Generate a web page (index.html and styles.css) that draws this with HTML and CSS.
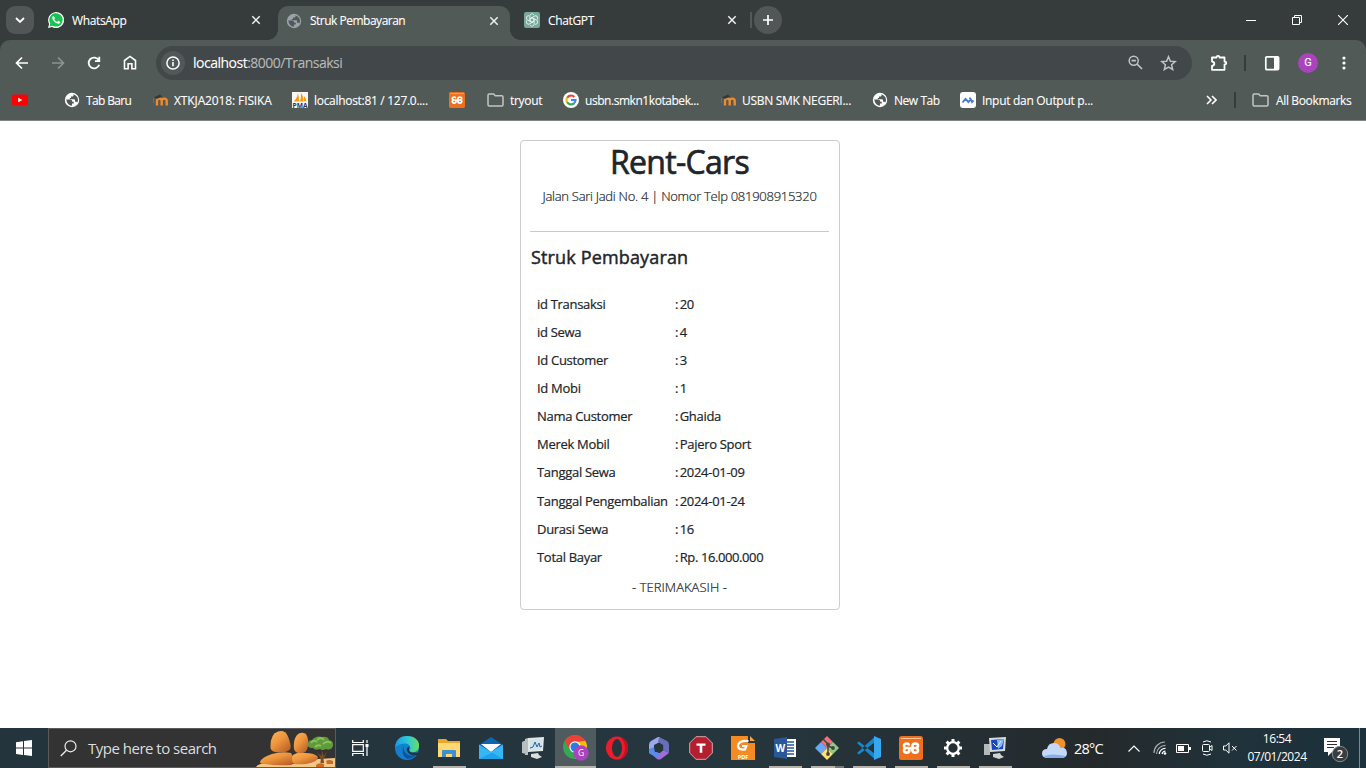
FILE: index.html
```html
<!DOCTYPE html>
<html lang="id">
<head>
<meta charset="utf-8">
<title>Struk Pembayaran</title>
<link rel="stylesheet" href="styles.css">
</head>
<body>
<svg class="defs" width="0" height="0">
  <defs>
    <symbol id="globe" viewBox="0 0 16 16"><circle cx="8" cy="8" r="7.200" fill="currentColor"/><path d="M2.300 7.600h3.500q2.500 0 2.500 2.200h1.500v1.700H8v2.300Q3 13.500 2.300 7.600zM9.500 2.200v1.200q0 1-1.200 1H7v1.500H5.800v1.400h4.400q.8 0 .8 1.300v1.200h1.300q.9 0 1.200.8Q15.500 4.500 9.500 2.200z" fill="var(--cut)"/></symbol>
    <symbol id="close" viewBox="0 0 10 10"><path d="M1.300 1.300l7.400 7.400M8.700 1.300L1.300 8.700" stroke="#eef1f0" stroke-width="1.500"/></symbol>
    <symbol id="moodle" viewBox="0 0 16 16"><path d="M5 13.500V9c0-3.200 4.700-3.200 4.700 0v4.500M9.700 9c0-3.200 5-3.200 5 0v4.500" fill="none" stroke="#ef8b2c" stroke-width="2.400"/><path d="M1.500 5.500L8 2.500l2 2-4.500 2.200z" fill="#353838"/><path d="M1.500 5.500v5.500" stroke="#6d6c66"/></symbol>
    <symbol id="folder" viewBox="0 0 17 14"><path d="M1 2.200V11.800q0 1.200 1.200 1.200H14.800q1.200 0 1.200-1.200V4q0-1.200-1.200-1.200H8.300L6.600 1H2.200Q1 1 1 2.200z" fill="none" stroke="#c2c5c3" stroke-width="1.500"/></symbol>
    <symbol id="xampp" viewBox="0 0 24 24"><rect width="24" height="24" rx="2.500" fill="#ee6f1c"/><path d="M2 2.500h20" stroke="#ffc59d"/><path d="M9.800 9.500Q9.800 7.500 7.800 7.500 5 7.500 5 9.800T7.800 12h8.400q2.800 0 2.800-2.200T16.200 7.500q-2.800 0-2.800 2.500v4q0 2.600 2.800 2.600 2.800 0 2.800-2.300T16.200 12M7.800 12Q5 12 5 14.300t2.800 2.300q2.600 0 2.600-2.400V12" fill="none" stroke="#fff" stroke-width="2.600"/></symbol>
  </defs>
</svg>

<header class="browser">
  <div class="tabs">
    <div class="tab-menu"><svg width="10" height="6" viewBox="0 0 10 6"><path d="M1 1l4 4 4-4" fill="none" stroke="#fff" stroke-width="1.800"/></svg></div>
    <div class="tab tab-first">
      <svg width="16" height="16" viewBox="0 0 16 16"><path d="M0 16l1.100-4.100A8 8 0 1 1 4.100 15z" fill="#fff"/><path d="M1.500 14.500l.8-3A6.700 6.700 0 1 1 4.600 13.700z" fill="#17c351"/><path d="M5.700 3.900c-1.700.3-1.900 2.200-.8 3.900 1.200 2 3.300 3.800 5.400 4 1.300 0 2.100-1 1.900-2l-2-1-1 1.200C7.700 9.400 6.700 8.300 6.200 7.200L7 6.200z" fill="#fff"/></svg>
      <span class="tab-title">WhatsApp</span><svg class="x" width="10" height="10"><use href="#close"/></svg>
    </div>
    <div class="tab tab-active">
      <svg class="globe-grey" width="16" height="16"><use href="#globe"/></svg>
      <span class="tab-title title-active">Struk Pembayaran</span><svg class="x" width="10" height="10"><use href="#close"/></svg>
    </div>
    <div class="tab tab-last">
      <svg width="16" height="16" viewBox="0 0 16 16"><rect width="16" height="16" rx="2" fill="#76a99a"/><g fill="none" stroke="#e9f3ef" stroke-width=".9"><path id="petal" d="M8 5.700L5.900 6.900V3.900c0-2.400 3.500-2.800 4.200-.7M8 5.700l2.100 1.200"/><use href="#petal" transform="rotate(60 8 8)"/><use href="#petal" transform="rotate(120 8 8)"/><use href="#petal" transform="rotate(180 8 8)"/><use href="#petal" transform="rotate(240 8 8)"/><use href="#petal" transform="rotate(300 8 8)"/></g></svg>
      <span class="tab-title">ChatGPT</span><svg class="x" width="10" height="10"><use href="#close"/></svg>
    </div>
    <div class="tab-sep"></div>
    <div class="new-tab"><svg width="12" height="12" viewBox="0 0 12 12"><path d="M6 1v10M1 6h10" stroke="#fff" stroke-width="1.700"/></svg></div>
    <div class="window-controls">
      <svg width="10" height="10" viewBox="0 0 10 10"><path d="M0 5.500h10" stroke="#fff"/></svg>
      <svg width="10" height="10" viewBox="0 0 10 10"><path d="M.5 2.500h7v7h-7zM2.500 2.500v-2h7v7h-2" fill="none" stroke="#fff"/></svg>
      <svg width="10" height="10" viewBox="0 0 10 10"><path d="M0 0l10 10M10 0L0 10" stroke="#fff" stroke-width="1.100"/></svg>
    </div>
  </div>

  <div class="toolbar">
    <div class="nav">
      <svg width="14" height="14" viewBox="0 0 14 14"><path d="M13 7H2M7 1.500L1.500 7 7 12.500" fill="none" stroke="#fff" stroke-width="1.700"/></svg>
      <svg width="14" height="14" viewBox="0 0 14 14"><path d="M1 7h11M7 1.500L12.500 7 7 12.500" fill="none" stroke="#8d9391" stroke-width="1.700"/></svg>
      <svg width="14" height="14" viewBox="0 0 14 14"><path d="M11.800 4.300A5.400 5.400 0 1 0 12.200 8.700M12.300.8v4.400H8" fill="none" stroke="#fff" stroke-width="1.800"/></svg>
      <svg width="14" height="15" viewBox="0 0 14 15"><path d="M1.500 5.500v8.300h3.600V8.700h3.800v5.100h3.600V5.500L7 1.400z" fill="none" stroke="#fff" stroke-width="1.600"/></svg>
    </div>
    <div class="omnibox">
      <div class="info"><svg width="14" height="14" viewBox="0 0 14 14"><circle cx="7" cy="7" r="6.100" fill="none" stroke="#fff" stroke-width="1.500"/><path d="M7 6v4.300M7 3.500v1.500" stroke="#fff" stroke-width="1.600"/></svg></div>
      <div class="url"><span class="host">localhost</span>:8000/Transaksi</div>
      <svg width="15" height="15" viewBox="0 0 15 15"><circle cx="5.700" cy="5.700" r="4.500" fill="none" stroke="#c1c4c4" stroke-width="1.500"/><path d="M3.500 5.700h4.400M9 9l5 5" stroke="#c1c4c4" stroke-width="1.700"/></svg>
      <svg width="17" height="16" viewBox="0 0 17 16"><path d="M8.500 1.700l1.900 4.500 4.900.4-3.700 3.200 1.100 4.700-4.200-2.500-4.200 2.500 1.100-4.700L1.700 6.600l4.900-.4z" fill="none" stroke="#c1c4c4" stroke-width="1.500"/></svg>
    </div>
    <div class="actions">
      <svg width="18" height="18" viewBox="0 0 18 18"><path d="M2 3.500H6.500Q6.500 1.800 8 1.800T9.500 3.500H14.500V7.500Q16.300 7.700 16.300 9T14.500 10.500V15.800H2V11.800Q4.300 11.500 4.300 9.700T2 7.500z" fill="none" stroke="#fff" stroke-width="1.800" stroke-linejoin="round"/></svg>
      <i class="vline"></i>
      <svg width="16" height="16" viewBox="0 0 16 16"><rect x="1.800" y="1.800" width="12.800" height="12.800" rx="1" fill="none" stroke="#fff" stroke-width="1.700"/><path d="M10 1h4v14h-4z" fill="#fff"/></svg>
      <b class="avatar">G</b>
      <svg width="4" height="14" viewBox="0 0 4 14"><g fill="#fff"><circle cx="2" cy="2" r="1.600"/><circle cx="2" cy="7" r="1.600"/><circle cx="2" cy="12" r="1.600"/></g></svg>
    </div>
  </div>

  <nav class="bookmarks">
    <a><svg width="16" height="16" viewBox="0 0 16 16"><rect y="2.500" width="16" height="11" rx="2" fill="#f00"/><path d="M6.200 5.800v4.400L10.400 8z" fill="#fff"/></svg></a>
    <a class="tight"><svg class="globe" width="16" height="16"><use href="#globe"/></svg><span>Tab Baru</span></a>
    <a class="loose"><svg width="16" height="16"><use href="#moodle"/></svg><span>XTKJA2018: FISIKA</span></a>
    <a><svg width="16" height="16" viewBox="0 0 16 16"><path d="M0 0h16v16H0z" fill="#f8f7f2"/><path d="M1.500 9.500Q5 7 6 1l1.500 8.500zM8 9.500Q9.500 5 8.800 1q3 3 2.500 8.500zM12 9V4q2 2 2.500 5.500z" fill="#f49a16"/><text x=".5" y="15.500" font-size="6.500" font-weight="700" textLength="15" lengthAdjust="spacingAndGlyphs" letter-spacing="0" fill="#30305f">PMA</text></svg><span>localhost:81 / 127.0....</span></a>
    <a><svg width="16" height="16"><use href="#xampp"/></svg></a>
    <a><svg width="17" height="14"><use href="#folder"/></svg><span>tryout</span></a>
    <a class="snug"><svg width="16" height="16" viewBox="0 0 16 16"><circle cx="8" cy="8" r="8" fill="#fff"/><g fill="none" stroke-width="2.200"><path d="M4.200 5.700A4.500 4.500 0 0 1 11.300 4.900" stroke="#ea4335"/><path d="M4.200 5.600a4.500 4.500 0 0 0 0 4.800" stroke="#fbbc05"/><path d="M4.200 10.300a4.500 4.500 0 0 0 6.800 1.100" stroke="#34a853"/><path d="M8 8h4.500a4.500 4.500 0 0 1-1.600 3.500" stroke="#4285f4"/></g></svg><span>usbn.smkn1kotabek...</span></a>
    <a><svg width="16" height="16"><use href="#moodle"/></svg><span>USBN SMK NEGERI...</span></a>
    <a class="snug"><svg class="globe" width="16" height="16"><use href="#globe"/></svg><span>New Tab</span></a>
    <a><svg width="16" height="16" viewBox="0 0 16 16"><rect width="16" height="16" rx="3" fill="#fff"/><path d="M2.500 10.500l3-3.500 3 3 2.500-3M10.500 6.500L12 10l1.500-1.500M10 7V5.500" fill="none" stroke="#4b7bd0" stroke-width="1.900"/></svg><span>Input dan Output p...</span></a>
    <a><svg width="11" height="10" viewBox="0 0 11 10"><path d="M1 1l4 4-4 4M6 1l4 4-4 4" fill="none" stroke="#fff" stroke-width="1.600"/></svg></a>
    <i class="vline"></i>
    <a class="all"><svg width="17" height="14"><use href="#folder"/></svg><span>All Bookmarks</span></a>
  </nav>
</header>

<main class="page">
  <section class="receipt">
    <h2>Rent-Cars</h2>
    <p class="address">Jalan Sari Jadi No. 4 | Nomor Telp 081908915320</p>
    <hr>
    <h5>Struk Pembayaran</h5>
    <table>
      <tr><td>id Transaksi</td><td><i>:</i>20</td></tr>
      <tr><td>id Sewa</td><td><i>:</i>4</td></tr>
      <tr><td>Id Customer</td><td><i>:</i>3</td></tr>
      <tr><td>Id Mobi</td><td><i>:</i>1</td></tr>
      <tr><td>Nama Customer</td><td><i>:</i>Ghaida</td></tr>
      <tr><td>Merek Mobil</td><td><i>:</i>Pajero Sport</td></tr>
      <tr><td>Tanggal Sewa</td><td><i>:</i>2024-01-09</td></tr>
      <tr><td>Tanggal Pengembalian</td><td><i>:</i>2024-01-24</td></tr>
      <tr><td>Durasi Sewa</td><td><i>:</i>16</td></tr>
      <tr><td>Total Bayar</td><td class="total"><i>:</i>Rp. 16.000.000</td></tr>
    </table>
    <p class="thanks">- TERIMAKASIH -</p>
  </section>
</main>

<footer class="taskbar">
  <div class="start"><svg width="16" height="16" viewBox="0 0 16 16"><path d="M0 2.200l7-1v6.400H0zM8 1l8-1v7.600H8zM0 8.500h7v6.400l-7-1zM8 8.500h8V16l-8-1z" fill="#fff"/></svg></div>
  <div class="search">
    <svg width="17" height="17" viewBox="0 0 17 17"><circle cx="10.500" cy="6.300" r="5.500" fill="none" stroke="#eee" stroke-width="1.200"/><path d="M6.500 10.300L.8 16" stroke="#eee" stroke-width="1.300"/></svg>
    <span>Type here to search</span>
    <svg class="scene" width="80" height="37" viewBox="0 0 80 37">
      <defs><linearGradient id="rock" x2=".8" y2="1"><stop stop-color="#ffb55c"/><stop offset=".5" stop-color="#ed943c"/><stop offset="1" stop-color="#b9602a"/></linearGradient></defs>
      <path d="M1 37Q3 33 15 33l30 1 18-5 17-1v9z" fill="#f3c789"/>
      <path d="M5 32q2-5 12-8 10-3 19-1 4 5 1 12-15 1-27-1-5 0-5-2z" fill="url(#rock)"/>
      <path d="M15.500 18Q15 4 23 1.500q7-2 10 5 4 10 2 13-3 3-9 3-10 0-10.500-4.500z" fill="url(#rock)"/>
      <path d="M38 25q4-3 12-2 10 0 13 4 0 5-12 7-12 1-13-1-2-5 0-8z" fill="url(#rock)"/>
      <path d="M39 19q-1-9 3-14 4-4 9-1 3 5 2 12-1 6-5 7-8 1-9-4z" fill="url(#rock)"/>
      <path d="M61 35q3-3 8-1v3h-8zM71 31q3-2 7 0v3h-6z" fill="#c96b29"/>
      <path d="M65.500 33q1.500-5-4-11l5 4 .5-6 1.500 6 4-5-4 8 .5 4z" fill="#7c4a25"/>
      <path d="M53 16q-1-6 4-6 4-5 10-3 6-1 7 3 5 1 4 6-2 5-7 3-4 2-6 0-5 2-7-1-4 0-5-2z" fill="#5f9a3c"/>
      <path d="M56 13q3-4 6-1M62 10q4-4 7 0M68 14q4-4 8-1M60 17q3-3 6-1" fill="none" stroke="#8cc257" stroke-width="1.800"/>
    </svg>
  </div>
  <div class="task-view"><svg width="17" height="16" viewBox="0 0 17 16"><path d="M.7 4.700h10.600v6.600H.7zM.7 0v2.500h10.600V0M.7 16v-2.500h10.600V16M15 0v3M15 7v9" fill="none" stroke="#fff" stroke-width="1.200"/><path d="M13.500 4h3v3h-3z" fill="#fff"/></svg></div>

  <div class="apps">
    <div><svg width="24" height="24" viewBox="0 0 24 24"><defs><linearGradient id="edge" x2="1"><stop stop-color="#169bea"/><stop offset=".55" stop-color="#30cbd2"/><stop offset="1" stop-color="#6bdb5e"/></linearGradient></defs><circle cx="12" cy="12" r="12" fill="#137fce"/><path d="M0 11C1 3 6 0 12 0c8 0 13 5 12 11-.8 4.500-5 6-8 5-2-.6-2-1.500-1-2.500C17 9 10 4 0 11z" fill="url(#edge)"/><path d="M9 10q-4 8 2.500 12.500Q16 24 22 18q-5 3-9.500.500T9 10z" fill="#0c55a5"/><path d="M14.500 10.500q-2 6 4 6h6v1.500q-5 2.500-9 .5-4.500-2.500-3.500-6.500z" fill="#24363d"/></svg></div>
    <div class="open"><svg width="22" height="19" viewBox="0 0 22 19"><path d="M0 0h8l2 2h12v16H0z" fill="#e9a82b"/><path d="M0 4h22v14H0z" fill="#ffda72"/><path d="M4 18v-6q0-1 1-1h12q1 0 1 1v6h-4v-3H8v3z" fill="#3e91d1"/></svg></div>
    <div><svg width="24" height="22" viewBox="0 0 24 22"><path d="M0 8L12 0l12 8v14H0z" fill="#0e65b2"/><path d="M2 7h20L12 15z" fill="#fff"/><path d="M0 7.500l12 7.500 12-7.500V22H0z" fill="#38b6f3"/><path d="M0 22l13-6.500L24 22z" fill="#1fa2ec"/></svg></div>
    <div><svg width="24" height="22" viewBox="0 0 24 22"><path d="M1 5l4-2v14l-4-1zM4 2l3-1v17H4z" fill="#b9bebe"/><path d="M7 1l16-1-1 14-15 1z" fill="#e2e6e4"/><path d="M9 3l12-1-1 10-11 1z" fill="#cfe3ea"/><path d="M9 11l3-1 2-5 2 5 2-4 1 4 2-1" fill="none" stroke="#2865a7"/><path d="M10 17l7-1 1 2 3 2-5 2-6-2z" fill="#dcdedc"/></svg></div>
    <div class="open current"><svg width="26" height="26" viewBox="0 0 26 26"><circle cx="12" cy="12" r="12" fill="#34a853"/><path d="M1.600 6A12 12 0 0 1 22.400 6L12 7.500 7 15z" fill="#ea4335"/><path d="M22.400 6A12 12 0 0 1 12 24l5-9-5-8z" fill="#fbbc04"/><circle cx="12" cy="12" r="5.700" fill="#fff"/><circle cx="12" cy="12" r="4.500" fill="#287ce5"/><circle cx="18" cy="18" r="7.700" fill="#a944bd"/><text x="18" y="21" text-anchor="middle" font-size="8.500" fill="#fff">G</text></svg></div>
    <div><svg width="22" height="24" viewBox="0 0 22 24"><ellipse cx="11" cy="12" rx="11" ry="11.500" fill="#ed1c2e"/><path d="M14 1q8 2 8 11t-8 11q5-4 5-11T14 1z" fill="#bc1222"/><ellipse cx="11" cy="12" rx="5" ry="9" fill="#26363d"/></svg></div>
    <div><svg width="22" height="24" viewBox="0 0 22 24"><path d="M10 1L3 5Q1 6 1 9v8l6 3-1-3V9l6-3V1z" fill="#9ba8eb"/><path d="M11 1l8 4q2 1 2 4v8l-6-3V9l-5-3z" fill="#686fba"/><path d="M1 16l6 0 5 1 3-3 6 3-8 6q-2 1-4 0z" fill="#a36bdc"/><path d="M1 13v4l8 5 4-5-6-1-1-5z" fill="#588cec"/><path d="M11 6.800l4.200 2.500v5L11 17l-4.200-2.500v-5z" fill="#26363d"/></svg></div>
    <div><svg width="24" height="24" viewBox="0 0 24 24"><path d="M7 .7h10L23.300 7v10L17 23.300H7L.7 17V7z" fill="#b31f2e" stroke="#dba6a9"/><path d="M7.500 7.500h9v2.300h-3.200v7h-2.600v-7H7.500z" fill="#fff"/></svg></div>
    <div><svg width="24" height="24" viewBox="0 0 24 24"><path d="M0 0h17v7h7v17H0z" fill="#f58b22"/><path d="M19 0l5 5h-5z" fill="#f8a54c"/><path d="M17.500 5Q8 4 7 9.500q-.5 4.500 7 4L15.300 10H11" fill="none" stroke="#fff" stroke-width="2.200"/><text x="12" y="22.500" text-anchor="middle" font-size="5.500" font-weight="700" fill="#fff">PDF</text></svg></div>
    <div class="open"><svg width="22" height="22" viewBox="0 0 22 22"><path d="M11 2h11v18H11z" fill="#fff"/><path d="M13 5h7M13 8h7M13 11h7M13 14h7M13 17h7" stroke="#285797" stroke-width="1.300"/><path d="M0 2l13-2v22L0 20z" fill="#2b579a"/><text x="6.300" y="14.500" text-anchor="middle" font-size="10" font-weight="700" fill="#fff">W</text></svg></div>
    <div class="open multi"><svg width="24" height="24" viewBox="0 0 24 24"><path d="M12 0l6 6-6 6-6-6z" fill="#ef7377"/><path d="M6 6l6 6-6 6-6-6z" fill="#6aa8f7"/><path d="M18 6l6 6-6 6-6-6z" fill="#8fcd83"/><path d="M12 12l6 6-6 6-6-6z" fill="#ffe072"/><path d="M8 3l5 5v10M13 10l5 2" fill="none" stroke="#454640" stroke-width="1.500"/><g fill="#454640"><circle cx="13" cy="8.500" r="1.900"/><circle cx="13" cy="18" r="1.900"/><circle cx="18" cy="12" r="1.900"/></g></svg></div>
    <div class="open"><svg width="24" height="24" viewBox="0 0 24 24"><path d="M0 7l2-1.500L18 18v5.500zM0 17l2 1.500L18 6V.5z" fill="#1687ce"/><path d="M17 0l7 3v18l-7 3z" fill="#35a9ef"/></svg></div>
    <div class="open"><svg width="24" height="24"><use href="#xampp"/></svg></div>
    <div class="open"><svg width="20" height="20" viewBox="0 0 20 20"><circle cx="10" cy="10" r="5.800" fill="none" stroke="#fff" stroke-width="2.300"/><g stroke="#fff" stroke-width="3"><path d="M10 1v3M10 16v3M1 10h3M16 10h3M3.600 3.600l2.200 2.200M14.200 14.200l2.200 2.200M3.600 16.400l2.200-2.200M14.200 5.800l2.200-2.200"/></g></svg></div>
    <div class="open"><svg width="24" height="22" viewBox="0 0 24 22"><path d="M1 7h6v11H1z" fill="#b4babb"/><path d="M6 1l17-1-1 14-15 1z" fill="#d5dcdd"/><path d="M8 3l13-1-1 10-11 1z" fill="#1946bc"/><path d="M14 3l7-1-2 7-4 3z" fill="#88b5f4"/><path d="M10 6l4 4 4-6" stroke="#e5eeff" fill="none"/><path d="M10 17l7-1 1 2 3 2-5 2-6-2z" fill="#d1d3d1"/></svg></div>
  </div>

  <div class="weather"><svg width="25" height="20" viewBox="0 0 25 20"><circle cx="17.500" cy="6" r="6" fill="#ef922d"/><path d="M5 20q-5-.5-5-4.500Q0 11 5 11q1-6 7-6 5 0 6.500 5 6-1 6.500 5 0 4.500-5 5z" fill="#c4d9f7"/><path d="M2 18q7-3 22 0-2 2-5 2H5q-2 0-3-2z" fill="#87adeb"/></svg><span>28°C</span></div>
  <div class="tray">
    <svg width="12" height="7" viewBox="0 0 12 7"><path d="M.5 6.500L6 1l5.500 5.500" fill="none" stroke="#fff" stroke-width="1.200"/></svg>
    <svg width="14" height="14" viewBox="0 0 14 14"><g fill="none"><path d="M1 12A11 11 0 0 1 12 1M3.500 13A9 9 0 0 1 12.500 4.300" stroke="#a5adb0" stroke-width="1.200"/><path d="M6.300 13A6 6 0 0 1 12.500 7.300M9 13a4 4 0 0 1 3.500-3" stroke="#fff" stroke-width="1.200"/></g><circle cx="12" cy="12.500" r="1.300" fill="#fff"/></svg>
    <svg width="15" height="9" viewBox="0 0 15 9"><path d="M.5.500h12v8H.5z" fill="none" stroke="#fff"/><path d="M2 2h6v5H2zM13 3h2v3h-2z" fill="#fff"/></svg>
    <svg width="13" height="16" viewBox="0 0 13 16"><rect x="1.500" y="4.500" width="7" height="7" rx="1" fill="none" stroke="#fff"/><path d="M9 7l2-1.500v5L9 9M2 2q3.500-2.500 8 0M2 14q3.500 2.500 8 0" fill="none" stroke="#fff"/></svg>
    <svg width="15" height="12" viewBox="0 0 15 12"><path d="M.5 4h2.300L6 .8v10.400L2.800 8H.5zM9 4l4.500 4.500M13.500 4L9 8.500" fill="none" stroke="#fff"/></svg>
  </div>
  <div class="clock"><span>16:54</span><span>07/01/2024</span></div>
  <div class="notifications"><svg width="25" height="25" viewBox="0 0 25 25"><path d="M0 0h16v14H8l-4 4v-4H0z" fill="#fff"/><path d="M3 3.500h10M3 6.500h10M3 9.500h7" stroke="#22323a"/><circle cx="16" cy="16" r="7.700" fill="#393d40" stroke="#85898b"/><text x="16" y="20" text-anchor="middle" font-size="11" font-weight="600" fill="#fff">2</text></svg></div>
</footer>
</body>
</html>
```
FILE: styles.css
```css
* { box-sizing: border-box; }
body {
  margin: 0;
  height: 768px;
  display: flex;
  flex-direction: column;
  overflow: hidden;
  background: #fff;
  color: #212529;
  font-family: "Open Sans", "Noto Sans", sans-serif;
  font-size: 12px;
}
svg { display: block; flex: none; }
.defs { position: absolute; }
.browser { height: 121px; background: #363c3b; color: #fff; -webkit-text-stroke: .1px; }

.tabs { height: 40px; display: flex; align-items: center; padding-left: 6px; }
.tab-menu { width: 28px; height: 28px; border-radius: 9px; background: #505756; display: grid; place-items: center; }
.tab { width: 238px; display: flex; align-items: center; gap: 8px; padding: 0 17px 0 14px; height: 28px; }
.tab-first { width: 244px; }
.tab-last { padding-right: 11px; }
.tab .x { margin-left: auto; }
.tab-title { white-space: nowrap; letter-spacing: -.35px; }
.title-active { letter-spacing: -.5px; }
.tab-active { width: 232px; height: 34px; align-self: flex-end; background: #525a58; border-radius: 10px 10px 0 0; padding: 0 11px 5px 8px; position: relative; }
.tab-active::before, .tab-active::after { content: ""; position: absolute; bottom: 0; width: 10px; height: 10px; }
.tab-active::before { left: -10px; background: radial-gradient(circle at 0 0, transparent 9.500px, #525a58 10px); }
.tab-active::after { right: -10px; background: radial-gradient(circle at 100% 0, transparent 9.500px, #525a58 10px); }
.globe-grey { color: #9da1aa; --cut: #525a58; }
.globe { color: #fff; --cut: #525a58; }
.tab-sep { width: 2px; height: 16px; background: #535958; margin-left: 2px; }
.new-tab { width: 28px; height: 28px; margin-left: 2px; border-radius: 50%; background: #505756; display: grid; place-items: center; }
.window-controls { margin-left: auto; width: 138px; display: grid; grid-template-columns: repeat(3, 46px); justify-items: center; }

.toolbar { height: 45px; background: #525a58; border-radius: 10px 10px 0 0; display: flex; align-items: center; }
.nav { width: 156px; padding-left: 15px; display: flex; gap: 22px; align-items: center; }
.omnibox { width: 1036px; height: 34px; border-radius: 17px; background: #424749; display: flex; align-items: center; padding: 0 15px 0 5px; }
.info { width: 24px; height: 24px; border-radius: 50%; background: #525858; display: grid; place-items: center; }
.url { flex: 1; margin-left: 8px; font-size: 14px; letter-spacing: -.5px; color: #b6baba; }
.host { color: #fff; }
.omnibox > svg:last-child { margin-left: 17px; }
.actions { flex: 1; display: grid; grid-template-columns: 34px 19px 35px 44px 4px; align-items: center; padding-left: 18px; }
.actions svg:nth-of-type(2) { margin-left: 1px; }
.vline { width: 2px; height: 16px; background: #363c3b; }
.avatar { width: 20px; height: 20px; border-radius: 50%; background: #a944bd; font: 11px/20px Roboto, sans-serif; text-align: center; }

.bookmarks { height: 36px; background: #525a58; border-bottom: 1px solid #808684; padding: 0 0 5px 12px; display: grid; grid-template-columns: 52px 88px 140px 157px 38px 76px 157px 152px 88px 246px 28px 17px 114px; align-items: center; white-space: nowrap; }
.bookmarks a { display: flex; align-items: center; gap: 6px; letter-spacing: -.3px; }
.bookmarks .tight { letter-spacing: -.65px; }
.bookmarks .snug { letter-spacing: -.45px; }
.bookmarks .loose { letter-spacing: -.12px; }
.bookmarks .all { gap: 7px; padding-left: 1px; letter-spacing: -.36px; }

.page { flex: 1; padding: 19px 0 0 520px; }
.receipt { width: 320px; height: 470px; border: 1px solid #ccc; border-radius: 4px; padding: 0 10px 0 9px; -webkit-text-stroke: .2px; }
h2 { margin: 2px 0 0; height: 38px; font-size: 32px; line-height: 38px; font-weight: 400; text-align: center; letter-spacing: -.7px; -webkit-text-stroke: .7px; }
.address { margin: 5px 0 0; line-height: 20px; text-align: center; font-size: 13px; font-weight: 300; white-space: nowrap; letter-spacing: -.27px; }
hr { border: 0; border-top: 1px solid #c7c8c9; margin: 25px 0 0; }
h5 { margin: 13px 0 0 1px; font-size: 18px; line-height: 24px; font-weight: 400; letter-spacing: .15px; -webkit-text-stroke: .45px; }
table { margin: 20.800px 0 0 7px; border-collapse: collapse; font-size: 13px; letter-spacing: -.3px; white-space: nowrap; }
td { padding: 0; height: 28.100px; line-height: 20px; vertical-align: middle; }
td i { font-style: normal; letter-spacing: 1.300px; }
td:first-child { width: 138px; }
.total { letter-spacing: -.4px; }
.thanks { margin: 6px 0 0; text-align: center; line-height: 20px; font-size: 13px; font-weight: 300; letter-spacing: .05px; }

.taskbar { height: 40px; background: linear-gradient(90deg, #23343d, #26363d 55%, #242c30 76%, #25292b 80%, #20323a 90%, #1c313b); color: #fff; display: grid; grid-template-columns: 48px 288px 50px 655px 86px 119px 79px 41px; align-items: center; overflow: hidden; }
.start, .task-view { display: grid; place-items: center; }
.task-view { padding-right: 2px; }
.search { height: 40px; background: #333; border: 1px solid #5b5b5b; display: flex; align-items: center; padding-left: 11px; gap: 11px; overflow: hidden; }
.search span { font-size: 15px; letter-spacing: -.5px; color: #ddd; white-space: nowrap; }
.scene { margin-left: auto; align-self: flex-end; }
.apps { height: 40px; display: grid; grid-template-columns: repeat(15, 42px); }
.apps > div { display: grid; place-items: center; }
.open { background: linear-gradient(#b5b2ac, #b5b2ac) 5px 100% / 33px 2px no-repeat; }
.apps .current { margin-left: 1px; background: linear-gradient(#b5b2ac, #b5b2ac) 0 100% / 100% 2px no-repeat #505b60; }
.apps .multi { background: linear-gradient(90deg, #b5b2ac 24px, #73777a 24px) 5px 100% / 33px 2px no-repeat; }
.weather { display: flex; align-items: center; gap: 7px; font-size: 14.500px; letter-spacing: -.75px; padding-left: 1px; }
.tray { padding-left: 1px; display: grid; grid-template-columns: 25px 23px 25px 22px 22px; align-items: center; }
.clock { display: flex; flex-direction: column; align-items: center; line-height: 18px; letter-spacing: -.45px; padding-bottom: 1px; margin-left: -7px; width: 76px; }
.notifications { height: 40px; width: 36px; border-right: 1px solid #7e898e; margin-left: -1px; display: flex; align-items: center; padding: 5px 0 0; }
```
